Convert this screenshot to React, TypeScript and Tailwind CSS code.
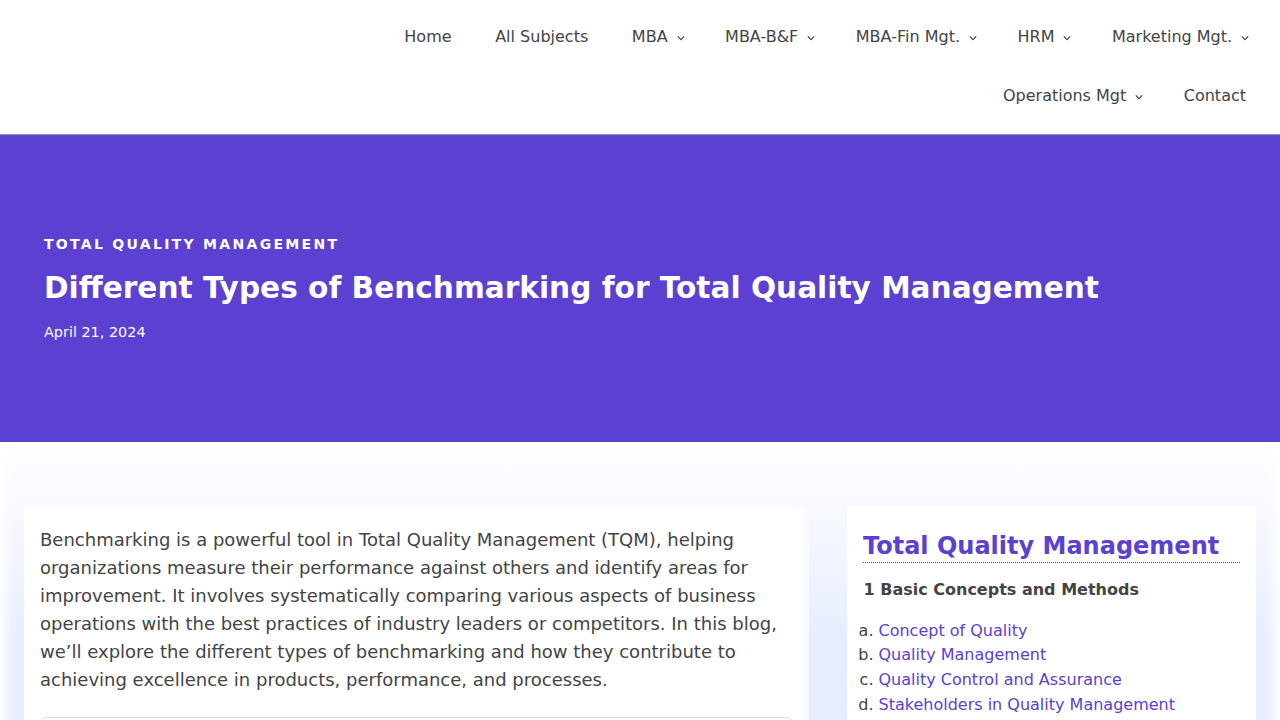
const font = "font-['DejaVu_Sans',sans-serif]";

const Chevron = () => (
  <svg viewBox="0 0 10 6" className="ml-[9px] mt-[3px] h-[6px] w-[8px] text-[#444444]" fill="none" stroke="currentColor" strokeWidth="1.5">
    <path d="M1 1l4 4 4-4" />
  </svg>
);

const NavItem = ({ label, menu }: { label: string; menu?: boolean }) => (
  <li className="flex h-[59px] items-center pl-[22px]">
    <a className={menu ? "flex items-center pr-[18.5px]" : "pr-[21.6px]"}>
      {label}
      {menu && <Chevron />}
    </a>
  </li>
);

const lessons = [
  ["a.", "Concept of Quality"],
  ["b.", "Quality Management"],
  ["c.", "Quality Control and Assurance"],
  ["d.", "Stakeholders in Quality Management"],
];

export default function App() {
  return (
    <div className={`${font} h-[720px] overflow-hidden bg-white text-[#444444]`}>
      <header className="h-[135px] border-b border-[#9a9a9a] pt-[7px] pr-[12.4px]">
        <ul className="ml-auto flex w-[900px] flex-wrap justify-end text-[16px]">
          <NavItem label="Home" />
          <NavItem label="All Subjects" />
          <NavItem label="MBA" menu />
          <NavItem label="MBA-B&F" menu />
          <NavItem label="MBA-Fin Mgt." menu />
          <NavItem label="HRM" menu />
          <NavItem label="Marketing Mgt." menu />
          <NavItem label="Operations Mgt" menu />
          <NavItem label="Contact" />
        </ul>
      </header>

      <section className="h-[307px] bg-[#5c40d2] px-[44px] pt-[100px] text-white">
        <p className="text-[14px] font-bold uppercase leading-[18px] tracking-[2.3px]">Total Quality Management</p>
        <h1 className="mt-[15px] text-[29.6px] font-bold leading-[40px]">
          Different Types of Benchmarking for Total Quality Management
        </h1>
        <p className="mt-[14px] text-[14.4px] leading-[20px]">April 21, 2024</p>
      </section>

      <main className="flex h-[340px] items-start gap-[38px] bg-gradient-to-b from-white to-[#e8eeff] to-[190px] pt-[64px] pl-[24px] shadow-[inset_6px_0_14px_#ffffff,inset_-6px_0_14px_#ffffff]">
        <article className="h-[300px] w-[785px] shrink-0 bg-white pt-[20px] pl-[16px] pr-[16px] shadow-[inset_-6px_0_14px_-4px_#f4f7ff]">
          <p className="text-[18px] leading-[28px]">
            Benchmarking is a powerful tool in Total Quality Management (TQM), helping organizations measure their
            performance against others and identify areas for improvement. It involves systematically comparing various
            aspects of business operations with the best practices of industry leaders or competitors. In this blog,
            we’ll explore the different types of benchmarking and how they contribute to achieving excellence in
            products, performance, and processes.
          </p>
          <div className="mt-[23px] h-[60px] rounded-[6px] border border-[#e2e2e2]" />
        </article>

        <aside className="h-[300px] w-[409px] shrink-0 bg-white px-[16px] pt-[24px]">
          <h2 className="border-b border-dotted border-[#5c40d2] text-[24px] font-bold leading-[32px] text-[#5c40d2]">
            Total Quality Management
          </h2>
          <h3 className="mt-[16px] pl-[0.5px] text-[16px] font-bold leading-[22px]">1 Basic Concepts and Methods</h3>
          <ol className="mt-[17.8px] text-[16px] leading-[24.6px]">
            {lessons.map(([mark, title]) => (
              <li key={mark} className="flex">
                <span className="-ml-[5.5px] mr-[5px] w-[16px] shrink-0 whitespace-nowrap text-right">{mark}</span>
                <a className="text-[#5c40d2]">{title}</a>
              </li>
            ))}
          </ol>
        </aside>
      </main>
    </div>
  );
}
